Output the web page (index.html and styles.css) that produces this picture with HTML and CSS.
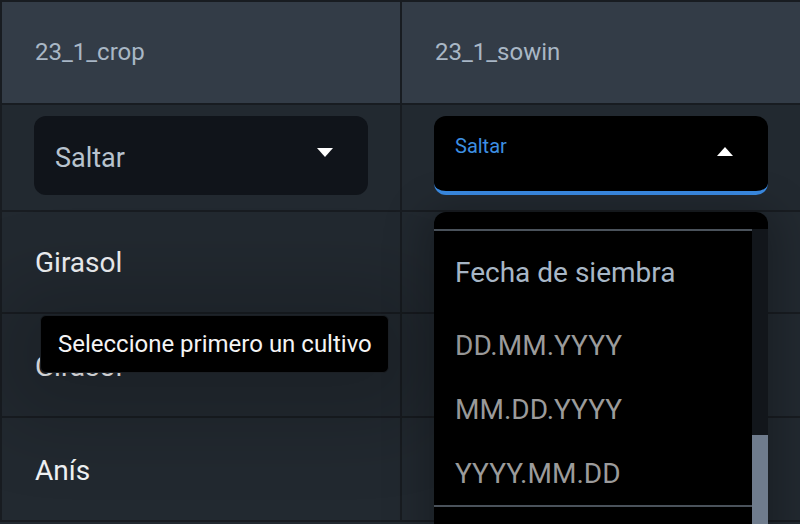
FILE: index.html
```html
<!DOCTYPE html>
<html lang="es">
<head>
<meta charset="utf-8">
<title>Tabla</title>
<link rel="stylesheet" href="styles.css">
</head>
<body>
<div class="page">
  <div class="table">
    <div class="cell head">23_1_crop</div>
    <div class="cell head">23_1_sowin</div>

    <div class="cell r1">
      <div class="select">
        <span class="value">Saltar</span>
        <svg class="arrow" width="16" height="9" viewBox="0 0 16 9"><path d="M0 0 L16 0 L8 9 Z" fill="#fff"/></svg>
      </div>
    </div>
    <div class="cell r1">
      <div class="select open">
        <span class="label">Saltar</span>
        <svg class="arrow up" width="16" height="9" viewBox="0 0 16 9"><path d="M0 9 L16 9 L8 0 Z" fill="#fff"/></svg>
      </div>
    </div>

    <div class="cell r2">Girasol</div>
    <div class="cell r2"></div>

    <div class="cell r3">Girasol</div>
    <div class="cell r3"></div>

    <div class="cell r4">Anís</div>
    <div class="cell r4"></div>
  </div>

  <div class="menu">
    <div class="scroller">
      <div class="list">
        <div class="group">Fecha de siembra</div>
        <div class="item">DD.MM.YYYY</div>
        <div class="item">MM.DD.YYYY</div>
        <div class="item">YYYY.MM.DD</div>
      </div>
      <div class="track"><div class="thumb"></div></div>
    </div>
  </div>

  <div class="tooltip">Seleccione primero un cultivo</div>
</div>
</body>
</html>
```

FILE: styles.css
```css
html, body {
  margin: 0;
  padding: 0;
  background: #222930;
  overflow: hidden;
}
body {
  font-family: Roboto, "Liberation Sans", sans-serif;
  width: 800px;
  height: 524px;
}
.page {
  position: relative;
  width: 800px;
  height: 524px;
  overflow: hidden;
}
.table {
  display: grid;
  grid-template-columns: 400px 400px;
  grid-template-rows: 103px 107px 102px 104px 104px;
  border-top: 2px solid #181c21;
  border-left: 2px solid #181c21;
  background: #222930;
}
.cell {
  border-right: 2px solid #181c21;
  border-bottom: 2px solid #181c21;
  padding-left: 33px;
  display: flex;
  align-items: center;
  color: #f2f4f6;
  font-size: 28px;
}
.head {
  background: #333c47;
  color: #a9b7c5;
  font-size: 24px;
  padding-bottom: 2px;
}
.r1 {
  padding-left: 32px;
  align-items: flex-start;
  padding-top: 11px;
}
.r3 {
  padding-top: 2px;
}
.r4 {
  padding-top: 2px;
}
.select {
  width: 334px;
  height: 79px;
  box-sizing: border-box;
  border-radius: 12px;
  background: #10141a;
  display: flex;
  align-items: center;
  justify-content: space-between;
  padding: 4px 35px 0 21px;
}
.select .value {
  color: #b8c3ce;
  font-size: 27px;
}
.select .arrow {
  margin-bottom: 10px;
}
.select.open {
  background: #000;
  border-bottom: 4px solid #3a8be4;
  align-items: flex-start;
  padding-top: 18px;
  padding-bottom: 0;
}
.select .label {
  color: #3d8fe2;
  font-size: 20px;
}
.arrow {
  display: block;
}
.select .arrow.up {
  margin-top: 13px;
  margin-bottom: 0;
}
.menu {
  position: absolute;
  left: 434px;
  top: 212px;
  width: 334px;
  height: 330px;
  background: #000;
  border-radius: 12px 12px 0 0;
  padding-top: 17px;
  box-sizing: border-box;
  box-shadow: 0 8px 40px 10px rgba(0, 0, 0, 0.25);
}
.scroller {
  display: flex;
  height: 100%;
}
.list {
  flex: 1;
  border-top: 2px solid #4a525b;
  align-self: flex-start;
}
.group {
  height: 82px;
  display: flex;
  align-items: center;
  padding-left: 21px;
  color: #a8b7c7;
  font-size: 28px;
}
.item {
  height: 64px;
  display: flex;
  align-items: center;
  padding-left: 21px;
  color: #9b9b9b;
  font-size: 28px;
}
.item:last-child {
  border-bottom: 2px solid #4a525b;
}
.track {
  width: 16px;
  background: #12161b;
  padding-top: 206px;
  box-sizing: border-box;
}
.thumb {
  background: #6f7c8d;
  height: 200px;
}
.tooltip {
  position: absolute;
  left: 40px;
  top: 315px;
  width: 349px;
  height: 58px;
  box-sizing: border-box;
  background: #000;
  border: 1px solid #1b1f24;
  border-radius: 6px;
  color: #f4f4f4;
  font-size: 24px;
  display: flex;
  align-items: center;
  padding-left: 17px;
  box-shadow: 0 10px 80px 40px rgba(0, 0, 0, 0.18);
}
```
